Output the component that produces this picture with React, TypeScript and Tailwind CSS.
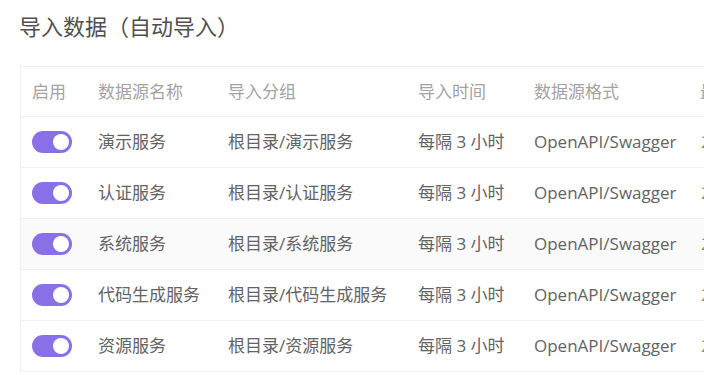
import React from "react";

const rows = [
  { name: "演示服务", group: "根目录/演示服务" },
  { name: "认证服务", group: "根目录/认证服务" },
  { name: "系统服务", group: "根目录/系统服务", hover: true },
  { name: "代码生成服务", group: "根目录/代码生成服务" },
  { name: "资源服务", group: "根目录/资源服务" },
];

const font = {
  fontFamily: '"Open Sans", "Noto Sans CJK SC", sans-serif',
};

function Toggle() {
  return (
    <div className="flex h-[22px] w-[40px] items-center justify-end rounded-full bg-[#8a70e6] pr-[3px]">
      <div className="h-[16px] w-[16px] rounded-full bg-white" />
    </div>
  );
}

export default function App() {
  return (
    <div
      className="h-[375px] w-[704px] overflow-hidden bg-white"
      style={font}
    >
      <div className="pl-[19px] pt-[11px] text-[22px] leading-[30px] text-[#505050]">
        导入数据（自动导入）
      </div>
      <div className="ml-[20px] mt-[25px] w-[800px] border-l border-t border-[#f0f0f0] text-[17px]">
        <div className="flex h-[50px] items-center border-b border-[#eeeeee] text-[#a3a3a3]">
          <div className="w-[65px] shrink-0 pl-[11px]">启用</div>
          <div className="w-[130px] shrink-0 pl-[12px]">数据源名称</div>
          <div className="w-[190px] shrink-0 pl-[12px]">导入分组</div>
          <div className="w-[116px] shrink-0 pl-[12px]">导入时间</div>
          <div className="w-[166px] shrink-0 pl-[12px]">数据源格式</div>
          <div className="shrink-0 whitespace-nowrap pl-[12px]">最后导入</div>
        </div>
        {rows.map((r) => (
          <div
            key={r.name}
            className={`flex h-[51px] items-center border-b border-[#f0f0f0] text-[#636363] ${
              r.hover ? "bg-[#fafafa]" : ""
            }`}
          >
            <div className="w-[65px] shrink-0 pl-[11px]">
              <Toggle />
            </div>
            <div className="w-[130px] shrink-0 whitespace-nowrap pl-[12px]">{r.name}</div>
            <div className="w-[190px] shrink-0 whitespace-nowrap pl-[12px]">{r.group}</div>
            <div className="w-[116px] shrink-0 whitespace-nowrap pl-[12px]">每隔 3 小时</div>
            <div className="w-[166px] shrink-0 whitespace-nowrap pl-[12px]">OpenAPI/Swagger</div>
            <div className="shrink-0 whitespace-nowrap pl-[13px] text-[#b08a3a]">2024-01-01</div>
          </div>
        ))}
      </div>
    </div>
  );
}
